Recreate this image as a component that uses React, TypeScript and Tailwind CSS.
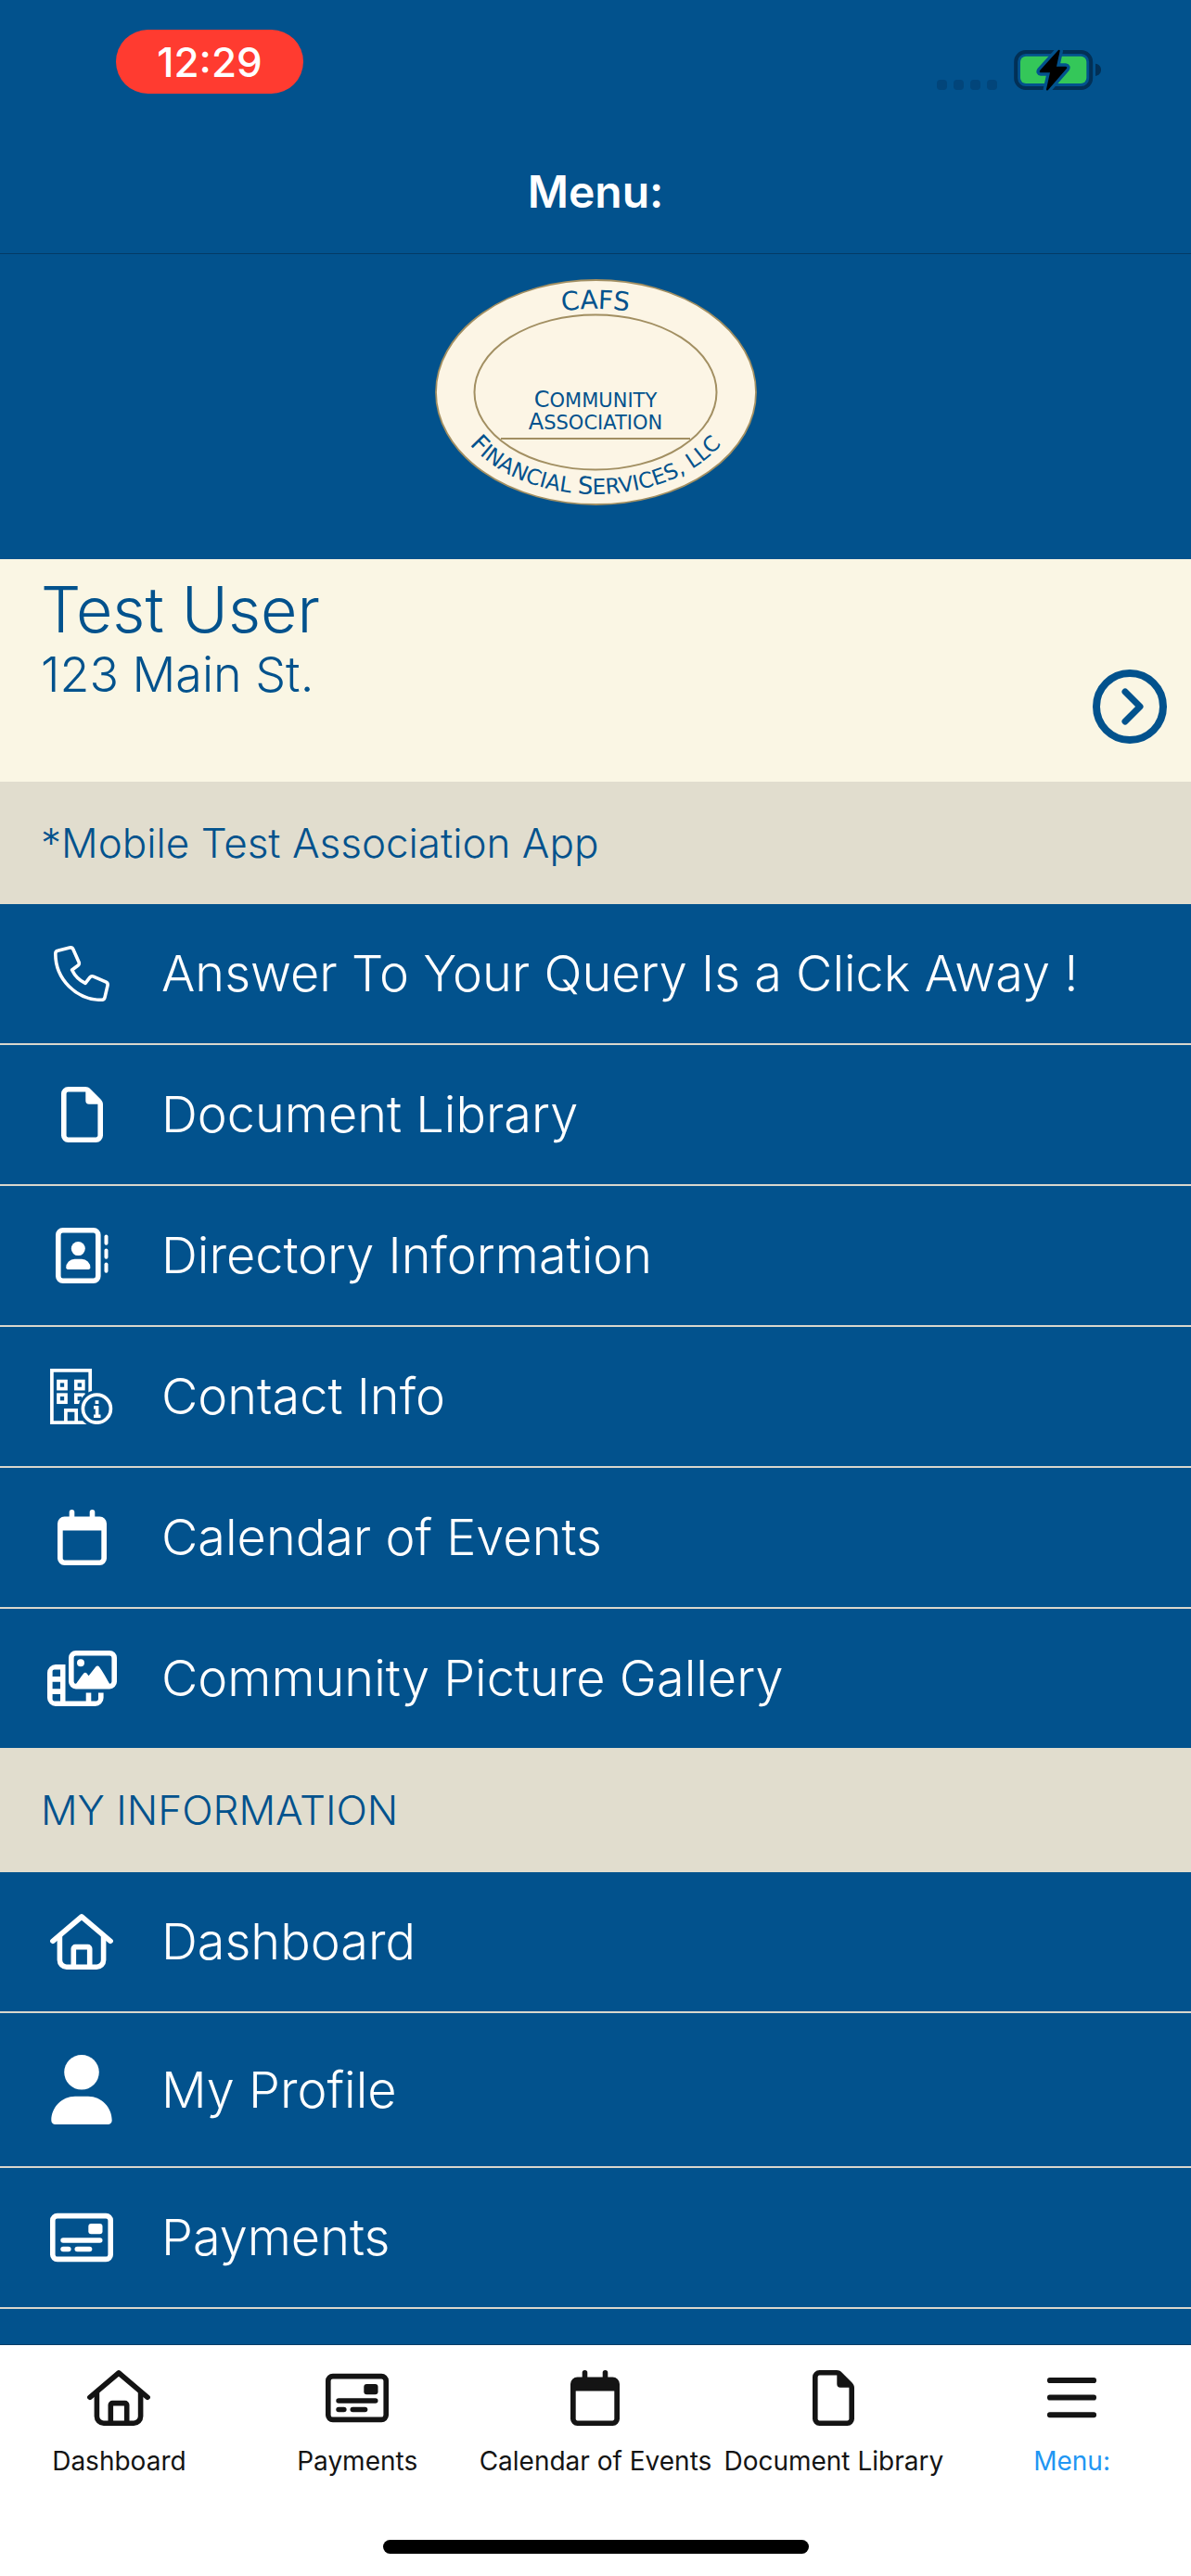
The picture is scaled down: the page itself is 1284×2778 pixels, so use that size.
import React from "react";

type IconProps = { className?: string };

function PhoneIcon({ className }: IconProps) {
  return (
    <svg viewBox="0 0 60 60" className={className} fill="none" stroke="currentColor" strokeWidth="3.6" strokeLinejoin="round" aria-hidden="true">
      <path d="M4.2 5.2 17 2c1.9-.4 3.4.3 4 2l6 13.4c.6 1.5.2 2.9-1 3.9L19.6 26c3 6.2 8.2 11.4 14.4 14.4l4.8-6.3c1-1.3 2.5-1.6 4-1l13.2 5.8c1.7.8 2.4 2.2 2 4l-3 12.8c-.4 1.7-1.7 2.6-3.4 2.6C24.2 58.3 1.8 35.9 1.8 8.4c0-1.6.9-2.9 2.4-3.2z" />
    </svg>
  );
}

function DocumentIcon({ className }: IconProps) {
  return (
    <svg viewBox="0 0 45 60" className={className} fill="currentColor" fillRule="evenodd" aria-hidden="true">
      <path d="M7.5 0H26c2 0 4 .8 5.3 2.2l11.5 11.5C44.2 15.1 45 17 45 19v33.5a7.5 7.5 0 0 1-7.5 7.5h-30A7.5 7.5 0 0 1 0 52.5v-45A7.5 7.5 0 0 1 7.5 0zm0 5.6a1.9 1.9 0 0 0-1.9 1.9v45c0 1 .8 1.9 1.9 1.9h30c1 0 1.9-.9 1.9-1.9V18.8H30a3.7 3.7 0 0 1-3.7-3.7V5.6z" />
    </svg>
  );
}

function DirectoryIcon({ className }: IconProps) {
  return (
    <svg viewBox="0 0 57 60" className={className} fill="currentColor" aria-hidden="true">
      <rect x="2.8" y="2.8" width="43" height="54.4" rx="5" fill="none" stroke="currentColor" strokeWidth="5.6" />
      <circle cx="24.3" cy="22.6" r="7.5" />
      <path d="M20.5 33.8h7.6a9.3 9.3 0 0 1 9.3 9.3c0 1-.8 1.9-1.9 1.9H13.1c-1 0-1.9-.9-1.9-1.9a9.3 9.3 0 0 1 9.3-9.3z" />
      <rect x="52.5" y="7.5" width="4" height="11.3" rx="2" />
      <rect x="52.5" y="22.5" width="4" height="11.3" rx="2" />
      <rect x="52.5" y="37.5" width="4" height="11.3" rx="2" />
    </svg>
  );
}

function ContactIcon({ className }: IconProps) {
  return (
    <svg viewBox="0 0 68 60" className={className} fill="none" stroke="currentColor" strokeWidth="3.7" aria-hidden="true">
      <mask id="building-cut">
        <rect width="68" height="60" fill="white" stroke="none" />
        <circle cx="50.4" cy="43.2" r="20" fill="black" stroke="none" />
      </mask>
      <g mask="url(#building-cut)">
        <rect x="1.9" y="1.9" width="41.3" height="56.2" />
        <rect x="9" y="13.6" width="8" height="8" />
        <rect x="27.8" y="13.6" width="8" height="8" />
        <rect x="9" y="28.2" width="8" height="8" />
        <rect x="27.8" y="28.2" width="8" height="8" />
        <path d="M16.9 58V44.9h11.3V58" />
      </g>
      <circle cx="50.4" cy="43.2" r="15" />
      <path fill="currentColor" stroke="none" d="M48.6 34.2h3.8V38h-3.8zM47 40h5.4v9.4h2.1V53H47v-3.6h1.8v-5.8H47z" />
    </svg>
  );
}

function CalendarIcon({ className }: IconProps) {
  return (
    <svg viewBox="0 0 53 60" className={className} fill="currentColor" fillRule="evenodd" aria-hidden="true">
      <rect x="12.7" y="0" width="5.6" height="15" rx="2.8" />
      <rect x="34.7" y="0" width="5.6" height="15" rx="2.8" />
      <path d="M7.5 7.5h38A7.5 7.5 0 0 1 53 15v37.5a7.5 7.5 0 0 1-7.5 7.5h-38A7.5 7.5 0 0 1 0 52.5V15a7.5 7.5 0 0 1 7.5-7.5zM5.7 22.6v29.9c0 1 .8 1.9 1.9 1.9h37.8c1 0 1.9-.9 1.9-1.9V22.6z" />
    </svg>
  );
}

function GalleryIcon({ className }: IconProps) {
  return (
    <svg viewBox="0 0 75 60" className={className} fill="currentColor" fillRule="evenodd" aria-hidden="true">
      <rect x="25.8" y="2.8" width="46.4" height="35.8" rx="5" fill="none" stroke="currentColor" strokeWidth="5.6" />
      <circle cx="36" cy="13.3" r="4" />
      <path d="M30 37.5c3.4-5 6.4-9.3 9.3-12.9.9-1.1 2.3-1.1 3.2 0l2.1 2.7 7.8-10.1c.9-1.1 2.5-1.1 3.4 0C59.5 22.5 64 30 68 37.5z" />
      <path d="M9 15h10.5v39.4h22.2v-8.8h5.6v8.8h5.5c1.2 0 2.2-1 2.2-2.2v-6.6h5.6V51a9 9 0 0 1-9 9H9a9 9 0 0 1-9-9V24a9 9 0 0 1 9-9zM7.5 20.6c-1 0-1.9.9-1.9 1.9v5.6H14v-7.5zM5.6 33.8v7.5H14v-7.5zM5.6 47v5.5c0 1 .9 1.9 1.9 1.9H14V47z" />
    </svg>
  );
}

function HomeIcon({ className }: IconProps) {
  return (
    <svg viewBox="0 0 68 60" className={className} fill="none" stroke="currentColor" strokeWidth="5.6" strokeLinecap="round" strokeLinejoin="round" aria-hidden="true">
      <path d="M2.9 29.3 34 3l31.1 26.3" />
      <path strokeLinecap="butt" d="M10.4 23v26.8a7.4 7.4 0 0 0 7.4 7.4h32.4a7.4 7.4 0 0 0 7.4-7.4V23" />
      <path strokeLinecap="butt" d="M25.3 57V37.5c0-1 .9-1.9 1.9-1.9h13.6c1 0 1.9.9 1.9 1.9V57" />
    </svg>
  );
}

function ProfileIcon({ className }: IconProps) {
  return (
    <svg viewBox="0 0 66 75" className={className} fill="currentColor" aria-hidden="true">
      <circle cx="33" cy="18.8" r="18.8" />
      <path d="M26 44.7h14c14.4 0 25.7 11.7 25.7 26 0 2.4-1.9 4.3-4.3 4.3H4.6C2.2 75 .3 73.1.3 70.7c0-14.3 11.3-26 25.7-26z" />
    </svg>
  );
}

function PaymentsIcon({ className }: IconProps) {
  return (
    <svg viewBox="0 0 68 60" className={className} fill="currentColor" aria-hidden="true">
      <rect x="2.8" y="6.6" width="62.4" height="46.8" rx="5" fill="none" stroke="currentColor" strokeWidth="5.6" />
      <rect x="41.3" y="15" width="15.2" height="11.3" rx="3" />
      <rect x="11.3" y="30.2" width="45.2" height="5.6" rx="2.8" />
      <rect x="11.3" y="39.7" width="11.3" height="5.6" rx="2.8" />
      <rect x="26.5" y="39.7" width="18.8" height="5.6" rx="2.8" />
    </svg>
  );
}

function MenuIcon({ className }: IconProps) {
  return (
    <svg viewBox="0 0 53 60" className={className} fill="currentColor" aria-hidden="true">
      <rect x="0" y="8" width="53" height="6" rx="2.8" />
      <rect x="0" y="26.6" width="53" height="6" rx="2.8" />
      <rect x="0" y="45.3" width="53" height="6" rx="2.8" />
    </svg>
  );
}

function BatteryIcon({ className }: IconProps) {
  const bolt = "M453 42 394 107q-5 7 3 8h29l-12 54q0 6 6 2l59-68q5-7-3-8h-29l11-50q0-6-5-3z";
  return (
    <svg viewBox="309 36 285 141" className={className} aria-hidden="true">
      <rect x="315.5" y="48" width="243" height="117" rx="32" fill="none" stroke="#023056" strokeWidth="12" />
      <path d="M573 86c12 2 18 10 18 20s-6 18-18 20z" fill="#023056" />
      <rect x="330" y="62" width="214" height="88" rx="18" fill="#34c759" />
      <path d={bolt} fill="none" stroke="#02528d" strokeWidth="20" strokeLinejoin="round" />
      <path d={bolt} fill="#000" />
    </svg>
  );
}

function Logo() {
  return (
    <svg viewBox="0 0 347 244" className="h-[244px] w-[347px] font-['DejaVu_Sans',sans-serif]" fill="#02528d" role="img" aria-label="Community Association Financial Services">
      <defs>
        <path id="arc-top" d="M25 123A148 91 0 0 1 321 123" />
        <path id="arc-bottom" d="M15 122A158 110 0 0 0 331 122" />
      </defs>
      <ellipse cx="173.5" cy="122" rx="172.5" ry="121" fill="#fcf5e5" stroke="#a28f62" strokeWidth="1.8" />
      <ellipse cx="173" cy="122" rx="130.5" ry="83.5" fill="none" stroke="#a28f62" strokeWidth="2" />
      <path d="M71 172h204" stroke="#a28f62" strokeWidth="2" />
      <g textAnchor="middle">
        <text fontSize="28">
          <textPath href="#arc-top" startOffset="50%">CAFS</textPath>
        </text>
        <text x="173" y="138" fontSize="24">
          C<tspan fontSize="21">OMMUNITY</tspan>
        </text>
        <text x="173" y="162" fontSize="24">
          A<tspan fontSize="21">SSOCIATION</tspan>
        </text>
        <text fontSize="26">
          <textPath href="#arc-bottom" startOffset="50%">
            F<tspan fontSize="23">INANCIAL </tspan>S<tspan fontSize="23">ERVICES, LLC</tspan>
          </textPath>
        </text>
      </g>
    </svg>
  );
}

const communityItems = [
  { label: "Answer To Your Query Is a Click Away !", icon: <PhoneIcon className="h-[60px]" /> },
  { label: "Document Library", icon: <DocumentIcon className="h-[60px]" /> },
  { label: "Directory Information", icon: <DirectoryIcon className="h-[60px]" /> },
  { label: "Contact Info", icon: <ContactIcon className="h-[60px]" /> },
  { label: "Calendar of Events", icon: <CalendarIcon className="h-[60px]" /> },
  { label: "Community Picture Gallery", icon: <GalleryIcon className="h-[60px]" /> },
];

const myItems = [
  { label: "Dashboard", icon: <HomeIcon className="h-[60px]" /> },
  { label: "My Profile", icon: <ProfileIcon className="h-[75px]" /> },
  { label: "Payments", icon: <PaymentsIcon className="h-[60px]" /> },
];

const tabs = [
  { label: "Dashboard", icon: <HomeIcon className="h-[60px]" />, active: false },
  { label: "Payments", icon: <PaymentsIcon className="h-[60px]" />, active: false },
  { label: "Calendar of Events", icon: <CalendarIcon className="h-[60px]" />, active: false },
  { label: "Document Library", icon: <DocumentIcon className="h-[60px]" />, active: false },
  { label: "Menu:", icon: <MenuIcon className="h-[60px]" />, active: true },
];

function MenuList({ items }: { items: { label: string; icon: React.ReactNode }[] }) {
  return (
    <ul className="divide-y-2 divide-[#d9d7cd]">
      {items.map((item) => (
        <li key={item.label}>
          <a href="#" className="flex items-center gap-[42px] py-[45px] pl-11 text-white">
            <span className="flex w-[88px] shrink-0 justify-center">{item.icon}</span>
            <span className="text-[54px] leading-[60px] font-light">{item.label}</span>
          </a>
        </li>
      ))}
    </ul>
  );
}

export default function App() {
  return (
    <div className="flex min-h-screen flex-col bg-[#02528d] font-['Inter',sans-serif]">
      <header className="border-b border-[#033b66]">
        <div className="flex items-start justify-between pt-8 pr-[96px] pl-[125px]">
          <div className="flex h-[69px] w-[202px] items-center justify-center rounded-full bg-[#ff3b30] text-[44px] leading-none font-medium text-white">
            12:29
          </div>
          <div className="flex items-end gap-[18px] pt-5">
            <div className="flex gap-[7px] pb-0.5">
              {[0, 1, 2, 3].map((dot) => (
                <span key={dot} className="size-[11px] rounded-[4px] bg-[#02457a]" />
              ))}
            </div>
            <BatteryIcon className="h-[47px] w-[95px]" />
          </div>
        </div>
        <h1 className="pt-[76px] pb-9 text-center text-[48px] leading-[60px] font-semibold text-white">Menu:</h1>
      </header>

      <main className="flex-1">
        <div className="flex justify-center pt-[27px] pb-[58px]">
          <Logo />
        </div>

        {/* Signed-in user */}
        <section className="flex h-60 justify-between bg-[#faf6e4] pr-[26px] pl-11 text-[#02528d]">
          <div className="pt-[13px]">
            <h2 className="text-[68px] leading-[82px] font-light">Test User</h2>
            <p className="text-[52px] leading-[60px] font-light">123 Main St.</p>
          </div>
          <button type="button" aria-label="Switch account" className="mt-[119px] size-20">
            <svg viewBox="0 0 80 80" fill="none" stroke="currentColor" strokeWidth="8" strokeLinecap="round" strokeLinejoin="round" aria-hidden="true">
              <circle cx="40" cy="40" r="36" />
              <path d="M35 24l16 16-16 16" strokeWidth="7" />
            </svg>
          </button>
        </section>

        <h3 className="bg-[#e1ddce] py-[41px] pl-11 text-[44px] leading-[50px] font-light text-[#02528d]">
          *Mobile Test Association App
        </h3>
        <MenuList items={communityItems} />

        <h3 className="bg-[#e1ddce] py-[42px] pl-11 text-[44px] leading-[50px] font-light text-[#02528d]">
          MY INFORMATION
        </h3>
        <div className="border-b-2 border-[#d9d7cd]">
          <MenuList items={myItems} />
        </div>
      </main>

      <footer className="mt-[38px] border-t border-[#033b66] bg-white">
        <nav className="grid grid-cols-5 pt-[27px]">
          {tabs.map((tab) => (
            <a key={tab.label} href="#" className="flex flex-col items-center gap-[18px] text-[#141414]">
              {tab.icon}
              <span className={`text-[28px] leading-10 whitespace-nowrap ${tab.active ? "text-[#2196f3]" : ""}`}>
                {tab.label}
              </span>
            </a>
          ))}
        </nav>
        <div className="mx-auto mt-[65px] mb-6 h-[15px] w-[459px] rounded-full bg-black" />
      </footer>
    </div>
  );
}
